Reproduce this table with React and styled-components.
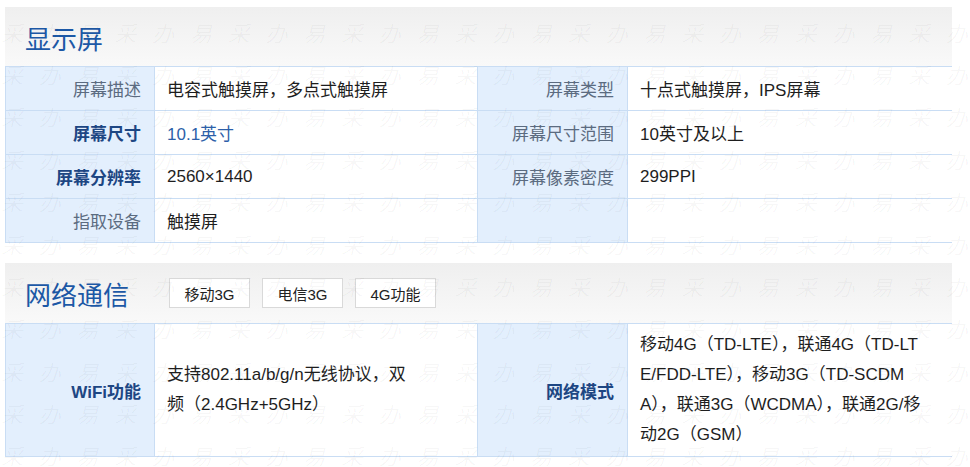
import styled, { createGlobalStyle } from "styled-components";

const GlobalStyle = createGlobalStyle`
  body {
    margin: 0;
    background: #fff;
    font-family: "Liberation Sans", "Noto Sans CJK SC", sans-serif;
  }
`;

const screen = [
  [
    { label: "屏幕描述", value: "电容式触摸屏，多点式触摸屏" },
    { label: "屏幕类型", value: "十点式触摸屏，IPS屏幕" },
  ],
  [
    { label: "屏幕尺寸", value: "10.1英寸", strong: true, link: true },
    { label: "屏幕尺寸范围", value: "10英寸及以上" },
  ],
  [
    { label: "屏幕分辨率", value: "2560×1440", strong: true },
    { label: "屏幕像素密度", value: "299PPI" },
  ],
  [
    { label: "指取设备", value: "触摸屏" },
    { label: "", value: "" },
  ],
];

const network = [
  [
    {
      label: "WiFi功能",
      strong: true,
      lines: ["支持802.11a/b/g/n无线协议，双", "频（2.4GHz+5GHz）"],
    },
    {
      label: "网络模式",
      strong: true,
      lines: [
        "移动4G（TD-LTE），联通4G（TD-LT",
        "E/FDD-LTE），移动3G（TD-SCDM",
        "A），联通3G（WCDMA），联通2G/移",
        "动2G（GSM）",
      ],
    },
  ],
];

// watermark repeats "易采办", each row starts on 采
const mark = "采办易";

const SpecRows = ({ rows, rowHeight }) => (
  <SpecTable $rowHeight={rowHeight}>
    {rows.map((row) =>
      row.map((item, i) => [
        <Label key={item.label + i + "l"} $strong={item.strong}>
          {item.label}
        </Label>,
        <Value key={item.label + i + "v"} $link={item.link}>
          {item.lines ? (
            <Lines>
              {item.lines.map((l) => (
                <span key={l}>{l}</span>
              ))}
            </Lines>
          ) : (
            item.value
          )}
        </Value>,
      ])
    )}
  </SpecTable>
);

const App = () => {
  return (
    <>
      <GlobalStyle />
      <Page>
        <Section>
          <SectionHead $height={59}>
            <Title>显示屏</Title>
          </SectionHead>
          <SpecRows rows={screen} rowHeight={43} />
        </Section>

        <Section>
          <SectionHead $height={60}>
            <Title>网络通信</Title>
            <Tags>
              <Tag>移动3G</Tag>
              <Tag>电信3G</Tag>
              <Tag>4G功能</Tag>
            </Tags>
          </SectionHead>
          <SpecRows rows={network} rowHeight={132} />
        </Section>

        <Watermark aria-hidden="true">
          {Array.from({ length: 12 * 26 }).map((_, i) => (
            <MarkChar key={i}>{mark[(i % 26) % 3]}</MarkChar>
          ))}
        </Watermark>
      </Page>
    </>
  );
};

const Page = styled.div`
  position: relative;
  width: 947px;
  padding: 7px 18px 12px 5px;
  overflow: hidden;
`;

const Section = styled.section`
  & + & {
    margin-top: 20px;
  }
`;

const SectionHead = styled.div`
  height: ${(p) => p.$height}px;
  display: flex;
  align-items: center;
  padding-left: 20px;
  background: linear-gradient(#efefef, #f9f9f9);
`;

const Title = styled.h2`
  margin: 0;
  font-family: "Noto Sans CJK SC", sans-serif;
  font-size: 26px;
  font-weight: normal;
  line-height: 1;
  color: #1c58a6;
  padding-top: 2px;
`;

const Tags = styled.div`
  display: flex;
  gap: 12px;
  margin-left: 40px;
`;

const Tag = styled.span`
  width: 79px;
  height: 28px;
  display: flex;
  align-items: center;
  justify-content: center;
  background: #fff;
  border: 1px solid #d9d9d9;
  font-size: 15px;
  color: #222;
`;

const SpecTable = styled.div`
  display: grid;
  grid-template-columns: 148px 322px 149px 324px;
  grid-auto-rows: ${(p) => p.$rowHeight}px;
  gap: 1px;
  padding: 1px;
  background: #c9ddf4;
`;

const Label = styled.div`
  display: flex;
  align-items: center;
  justify-content: flex-end;
  padding-right: 13px;
  background: #e3effd;
  font-size: 17px;
  font-weight: ${(p) => (p.$strong ? "bold" : "normal")};
  color: ${(p) => (p.$strong ? "#1d4683" : "#5b6b80")};
`;

const Value = styled.div`
  display: flex;
  align-items: center;
  padding-left: 12px;
  background: #fff;
  font-size: 17px;
  color: ${(p) => (p.$link ? "#2d5fa9" : "#1e1e1e")};
`;

const Lines = styled.div`
  display: flex;
  flex-direction: column;
  line-height: 30px;
  white-space: nowrap;
`;

const Watermark = styled.div`
  position: absolute;
  left: -7px;
  top: -32px;
  display: grid;
  grid-template-columns: repeat(26, 37.8px);
  grid-auto-rows: 42.4px;
  pointer-events: none;
`;

const MarkChar = styled.span`
  display: flex;
  align-items: center;
  justify-content: center;
  font-family: "Noto Sans CJK SC", sans-serif;
  font-size: 22px;
  font-style: italic;
  color: rgba(0, 0, 0, 0.035);
`;

export default App;
